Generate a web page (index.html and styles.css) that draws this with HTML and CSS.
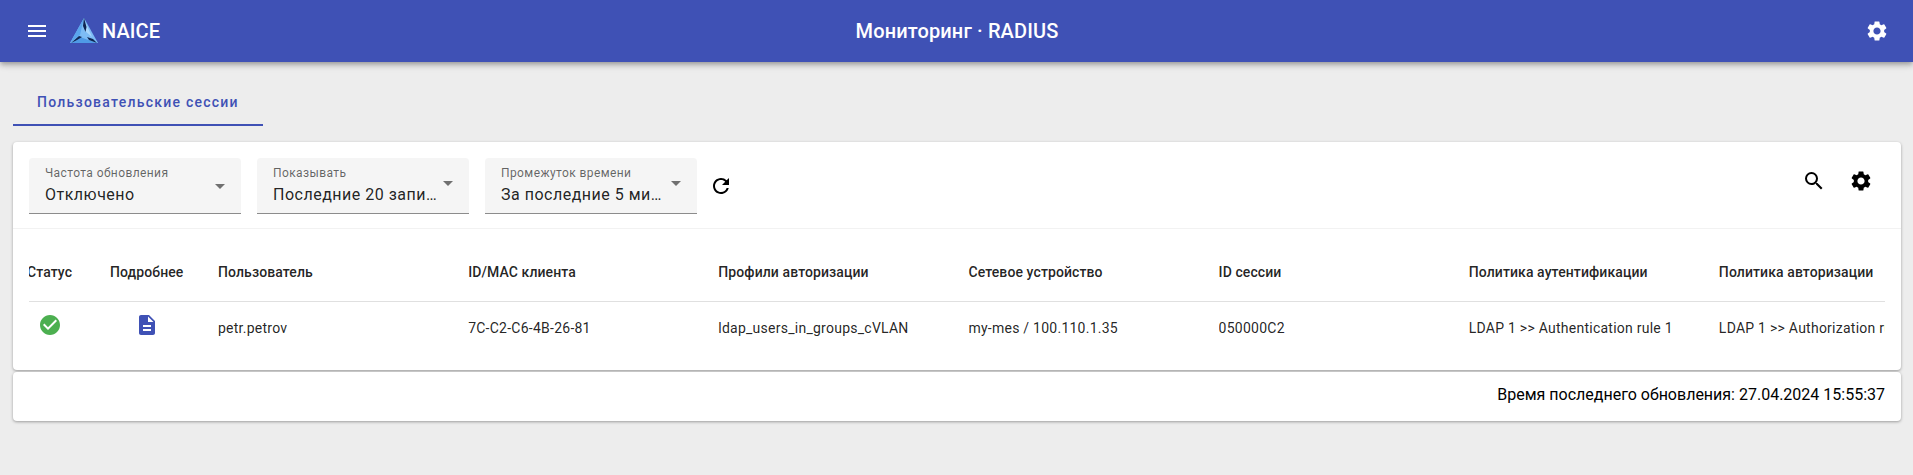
FILE: index.html
```html
<!DOCTYPE html>
<html lang="ru">
<head>
  <meta charset="UTF-8">
  <title>Мониторинг · RADIUS</title>
  <link rel="stylesheet" href="styles.css">
</head>
<body>
  <!-- Верхняя панель -->
  <header class="toolbar">
    <div class="toolbar-left">
      <svg class="icon menu-icon" viewBox="0 0 24 24"><path d="M3 18h18v-2H3v2zm0-5h18v-2H3v2zm0-7v2h18V6H3z"/></svg>
      <svg class="logo" viewBox="0 0 28 26">
        <polygon points="14,0 28,25 0,25" fill="#7dbcf5"/>
        <polygon points="14,1 22,19 15,13" fill="#a9d6fb"/>
        <polygon points="1,25 10,19 27,25" fill="#4f9ae6"/>
        <polygon points="14,0 5,16 0,25 10,17" fill="#5aa5ec"/>
        <path d="M14 0l2.5 9-1 5-2.5-6zM1 25l8-7 3 1-5 3zM17 19l6 2 4 4-8-3z" fill="#0f2552"/>
      </svg>
      <span class="logo-text">NAICE</span>
    </div>
    <div class="toolbar-title">Мониторинг · RADIUS</div>
    <svg class="icon" viewBox="0 0 24 24"><path d="M19.14 12.94c.04-.3.06-.61.06-.94 0-.32-.02-.64-.07-.94l2.03-1.58a.49.49 0 0 0 .12-.61l-1.92-3.32a.488.488 0 0 0-.59-.22l-2.39.96c-.5-.38-1.03-.7-1.62-.94l-.36-2.54a.484.484 0 0 0-.48-.41h-3.84c-.24 0-.43.17-.47.41l-.36 2.54c-.59.24-1.13.57-1.62.94l-2.39-.96c-.22-.08-.47 0-.59.22L2.74 8.87c-.12.21-.08.47.12.61l2.03 1.58c-.05.3-.09.63-.09.94s.02.64.07.94l-2.03 1.58a.49.49 0 0 0-.12.61l1.92 3.32c.12.22.37.29.59.22l2.39-.96c.5.38 1.03.7 1.62.94l.36 2.54c.05.24.24.41.48.41h3.84c.24 0 .44-.17.47-.41l.36-2.54c.59-.24 1.13-.56 1.62-.94l2.39.96c.22.08.47 0 .59-.22l1.92-3.32c.12-.22.07-.47-.12-.61l-2.01-1.58zM12 15.6c-1.98 0-3.6-1.62-3.6-3.6s1.62-3.6 3.6-3.6 3.6 1.62 3.6 3.6-1.62 3.6-3.6 3.6z"/></svg>
  </header>

  <main class="content">
    <nav class="tabs">
      <div class="tab">Пользовательские сессии</div>
    </nav>

    <section class="card">
      <div class="filters">
        <div class="field">
          <div class="field-text">
            <label>Частота обновления</label>
            <div class="field-value">Отключено</div>
          </div>
          <span class="arrow arrow-low"></span>
        </div>
        <div class="field">
          <div class="field-text">
            <label>Показывать</label>
            <div class="field-value">Последние 20 записей</div>
          </div>
          <span class="arrow"></span>
        </div>
        <div class="field">
          <div class="field-text">
            <label>Промежуток времени</label>
            <div class="field-value">За последние 5 минут</div>
          </div>
          <span class="arrow"></span>
        </div>
        <svg class="tool-icon refresh" viewBox="0 0 24 24"><path d="M17.65 6.35A7.958 7.958 0 0 0 12 4c-4.42 0-7.99 3.58-7.99 8s3.57 8 7.99 8c3.73 0 6.84-2.55 7.73-6h-2.08A5.99 5.99 0 0 1 12 18c-3.31 0-6-2.69-6-6s2.69-6 6-6c1.66 0 3.14.69 4.22 1.78L13 11h7V4l-2.35 2.35z"/></svg>
        <div class="filters-right">
          <svg class="tool-icon" viewBox="0 0 24 24"><path d="M15.5 14h-.79l-.28-.27A6.471 6.471 0 0 0 16 9.5 6.5 6.5 0 1 0 9.5 16c1.61 0 3.09-.59 4.23-1.57l.27.28v.79l5 4.99L20.49 19l-4.99-5zm-6 0C7.01 14 5 11.99 5 9.5S7.01 5 9.5 5 14 7.01 14 9.5 11.99 14 9.5 14z"/></svg>
          <svg class="tool-icon" viewBox="0 0 24 24"><path d="M19.14 12.94c.04-.3.06-.61.06-.94 0-.32-.02-.64-.07-.94l2.03-1.58a.49.49 0 0 0 .12-.61l-1.92-3.32a.488.488 0 0 0-.59-.22l-2.39.96c-.5-.38-1.03-.7-1.62-.94l-.36-2.54a.484.484 0 0 0-.48-.41h-3.84c-.24 0-.43.17-.47.41l-.36 2.54c-.59.24-1.13.57-1.62.94l-2.39-.96c-.22-.08-.47 0-.59.22L2.74 8.87c-.12.21-.08.47.12.61l2.03 1.58c-.05.3-.09.63-.09.94s.02.64.07.94l-2.03 1.58a.49.49 0 0 0-.12.61l1.92 3.32c.12.22.37.29.59.22l2.39-.96c.5.38 1.03.7 1.62.94l.36 2.54c.05.24.24.41.48.41h3.84c.24 0 .44-.17.47-.41l.36-2.54c.59-.24 1.13-.56 1.62-.94l2.39.96c.22.08.47 0 .59-.22l1.92-3.32c.12-.22.07-.47-.12-.61l-2.01-1.58zM12 15.6c-1.98 0-3.6-1.62-3.6-3.6s1.62-3.6 3.6-3.6 3.6 1.62 3.6 3.6-1.62 3.6-3.6 3.6z"/></svg>
        </div>
      </div>

      <div class="table-wrap">
        <table class="sessions">
          <thead>
            <tr>
              <th class="col-status">Статус</th>
              <th class="col-details">Подробнее</th>
              <th>Пользователь</th>
              <th>ID/MAC клиента</th>
              <th>Профили авторизации</th>
              <th>Сетевое устройство</th>
              <th>ID сессии</th>
              <th>Политика аутентификации</th>
              <th>Политика авторизации</th>
            </tr>
          </thead>
          <tbody>
            <tr>
              <td class="col-status">
                <svg class="status-icon" viewBox="0 0 24 24"><path d="M12 2C6.48 2 2 6.48 2 12s4.48 10 10 10 10-4.48 10-10S17.52 2 12 2zm-2 15l-5-5 1.41-1.41L10 14.17l7.59-7.59L19 8l-9 9z"/></svg>
              </td>
              <td class="col-details">
                <svg class="doc-icon" viewBox="0 0 24 24"><path d="M14 2H6c-1.1 0-1.99.9-1.99 2L4 20c0 1.1.89 2 1.99 2H18c1.1 0 2-.9 2-2V8l-6-6zm2 16H8v-2h8v2zm0-4H8v-2h8v2zm-3-5V3.5L18.5 9H13z"/></svg>
              </td>
              <td>petr.petrov</td>
              <td>7C-C2-C6-4B-26-81</td>
              <td>ldap_users_in_groups_cVLAN</td>
              <td>my-mes / 100.110.1.35</td>
              <td>050000C2</td>
              <td>LDAP 1 &gt;&gt; Authentication rule 1</td>
              <td>LDAP 1 &gt;&gt; Authorization rule 1</td>
            </tr>
          </tbody>
        </table>
      </div>
    </section>

    <div class="card updated">Время последнего обновления: 27.04.2024 15:55:37</div>
  </main>
</body>
</html>
```

FILE: styles.css
```css
/* Общие стили */
* {
  margin: 0;
  padding: 0;
  box-sizing: border-box;
  font-family: Roboto, 'Liberation Sans', sans-serif;
}

html, body {
  height: 100%;
  overflow: hidden;
}

body {
  background-color: #ededed;
  color: rgba(0, 0, 0, 0.87);
}

/* Верхняя панель */
.toolbar {
  height: 62px;
  background-color: #3f51b5;
  color: #fff;
  display: flex;
  align-items: center;
  justify-content: space-between;
  padding: 0 24px 0 25px;
  position: relative;
  box-shadow: 0 2px 4px -1px rgba(0, 0, 0, .2), 0 4px 5px 0 rgba(0, 0, 0, .14), 0 1px 10px 0 rgba(0, 0, 0, .12);
}

.toolbar-left {
  display: flex;
  align-items: center;
}

.icon {
  width: 24px;
  height: 24px;
  fill: #fff;
}

.menu-icon {
  margin-right: 21px;
}

.logo {
  width: 28px;
  height: 26px;
  margin-right: 4px;
}

.logo-text {
  font-size: 20px;
  font-weight: 500;
  letter-spacing: .1px;
}

.toolbar-title {
  position: absolute;
  left: 1px;
  right: 0;
  text-align: center;
  font-size: 20px;
  font-weight: 500;
  letter-spacing: .13px;
  pointer-events: none;
}

/* Вкладки */
.content {
  padding: 0 12px 0 13px;
}

.tabs {
  height: 64px;
  padding-top: 16px;
}

.tab {
  width: 250px;
  height: 48px;
  border-bottom: 2px solid #3f51b5;
  color: #3f51b5;
  font-size: 14px;
  font-weight: 500;
  letter-spacing: 1.25px;
  line-height: 48px;
  padding-left: 24px;
}

/* Карточки */
.card {
  background-color: #fff;
  border-radius: 4px;
  margin-top: 16px;
  box-shadow: 0 1px 3px rgba(0, 0, 0, .35);
}

.filters {
  height: 87px;
  display: flex;
  align-items: flex-start;
  gap: 16px;
  padding: 16px 16px 0;
  border-bottom: 1px solid #f2f2f2;
}

.field {
  width: 212px;
  height: 56px;
  background-color: #f5f5f5;
  border-radius: 4px 4px 0 0;
  border-bottom: 1px solid #8c8c8c;
  padding: 8px 16px 0;
  display: flex;
  justify-content: space-between;
  position: relative;
}

.field-text {
  width: 164px;
  min-width: 0;
}

.field label {
  display: block;
  font-size: 12px;
  line-height: 14px;
  letter-spacing: .4px;
  color: rgba(0, 0, 0, 0.6);
}

.field-value {
  font-size: 16px;
  line-height: 22px;
  margin-top: 4px;
  letter-spacing: .5px;
  white-space: nowrap;
  overflow: hidden;
  text-overflow: ellipsis;
}

.arrow {
  width: 0;
  height: 0;
  margin-top: 15px;
  border-left: 5px solid transparent;
  border-right: 5px solid transparent;
  border-top: 5px solid rgba(0, 0, 0, 0.54);
}

.arrow-low {
  margin-top: 18px;
}

.tool-icon {
  width: 24px;
  height: 24px;
  fill: #000;
  flex: none;
}

.refresh {
  margin: 16px 0 0 -4px;
}

.filters-right {
  margin-left: auto;
  display: flex;
  gap: 23px;
  padding: 11px 12px 0 0;
}

/* Таблица */
.table-wrap {
  margin: 0 16px;
  height: 141px;
  overflow: hidden;
}

.sessions {
  border-collapse: collapse;
  table-layout: fixed;
  width: 1942px;
  font-size: 14px;
  letter-spacing: .25px;
  margin-left: -2px;
}

.sessions th {
  height: 72px;
  padding-top: 14px;
  font-weight: 500;
  letter-spacing: .1px;
  text-align: left;
  white-space: nowrap;
  color: rgba(0, 0, 0, 0.87);
  border-bottom: 1px solid #e0e0e0;
}

.sessions td {
  height: 54px;
  white-space: nowrap;
  overflow: hidden;
}

.sessions .col-status {
  width: 83px;
}

.sessions .col-details {
  width: 108px;
}

td.col-status {
  padding-left: 11px;
}

td.col-details {
  padding-left: 25px;
}

.status-icon {
  width: 24px;
  height: 24px;
  fill: #4caf50;
  display: block;
  margin-top: -6px;
}

.doc-icon {
  width: 24px;
  height: 24px;
  fill: #3f51b5;
  display: block;
  margin-top: -6px;
}

.updated {
  margin-top: 2px;
  height: 49px;
  padding: 0 16px;
  text-align: right;
  line-height: 46px;
  font-size: 16px;
  color: #000;
}
```
